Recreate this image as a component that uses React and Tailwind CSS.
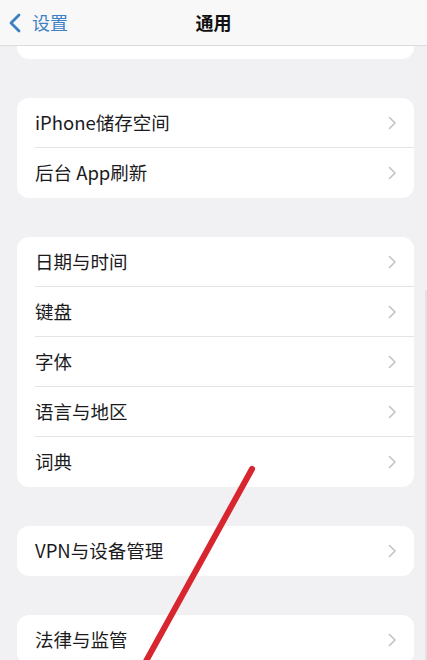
import React from 'react'

const FONT = { fontFamily: '"Noto Sans CJK SC", "Noto Sans", sans-serif' }

const GROUPS = [
  ['iPhone储存空间', '后台 App刷新'],
  ['日期与时间', '键盘', '字体', '语言与地区', '词典'],
  ['VPN与设备管理'],
  ['法律与监管'],
]

function Chevron() {
  return (
    <svg width="9" height="14" viewBox="0 0 9 14" fill="none">
      <path d="M1.5 1.5 L7 7 L1.5 12.5" stroke="#c3c3c7" strokeWidth="1.6" strokeLinecap="round" strokeLinejoin="round" />
    </svg>
  )
}

function Row({ label, last }) {
  return (
    <div className="flex h-[50px] items-center pl-[18px]">
      <div className={`flex h-full flex-1 items-center pr-[17px] ${last ? '' : 'border-b border-[#e4e4e6]'}`}>
        <span className="flex-1 text-[18.5px] text-[#1b1b1d]">{label}</span>
        <Chevron />
      </div>
    </div>
  )
}

export default function App() {
  return (
    <div className="relative h-[660px] w-[427px] overflow-hidden bg-[#f1f1f4]" style={FONT}>
      <div className="relative flex h-[46px] items-center border-b border-[#dcdcdf] bg-[#f8f8f9]">
        <div className="flex items-center pl-[8px] text-[#3d82c7]">
          <svg width="14" height="20" viewBox="0 0 14 20" fill="none">
            <path d="M11 2 L3 10 L11 18" stroke="#3b7fc4" strokeWidth="2.8" strokeLinecap="round" strokeLinejoin="round" />
          </svg>
          <span className="ml-[10px] text-[18px]">设置</span>
        </div>
        <div className="absolute inset-x-0 top-0 flex h-full items-center justify-center text-[18px] font-bold text-[#111]">
          通用
        </div>
      </div>

      <div className="ml-[17px] mr-[13px] h-[13px] rounded-b-[12px] bg-white" />

      <div className="mt-[39px] flex flex-col gap-[39px]">
        {GROUPS.map((g, i) => (
          <div key={i} className="ml-[17px] mr-[13px] overflow-hidden rounded-[12px] bg-white">
            {g.map((label, j) => (
              <Row key={label} label={label} last={j === g.length - 1} />
            ))}
          </div>
        ))}
      </div>

      <div className="absolute right-0 top-[290px] h-[370px] w-[2px] bg-[#e2e2e5]" />

      <svg className="absolute left-0 top-0" width="427" height="660" viewBox="0 0 427 660">
        <line x1="252" y1="469" x2="140" y2="672" stroke="#d7262f" strokeWidth="6" strokeLinecap="round" />
      </svg>
    </div>
  )
}
